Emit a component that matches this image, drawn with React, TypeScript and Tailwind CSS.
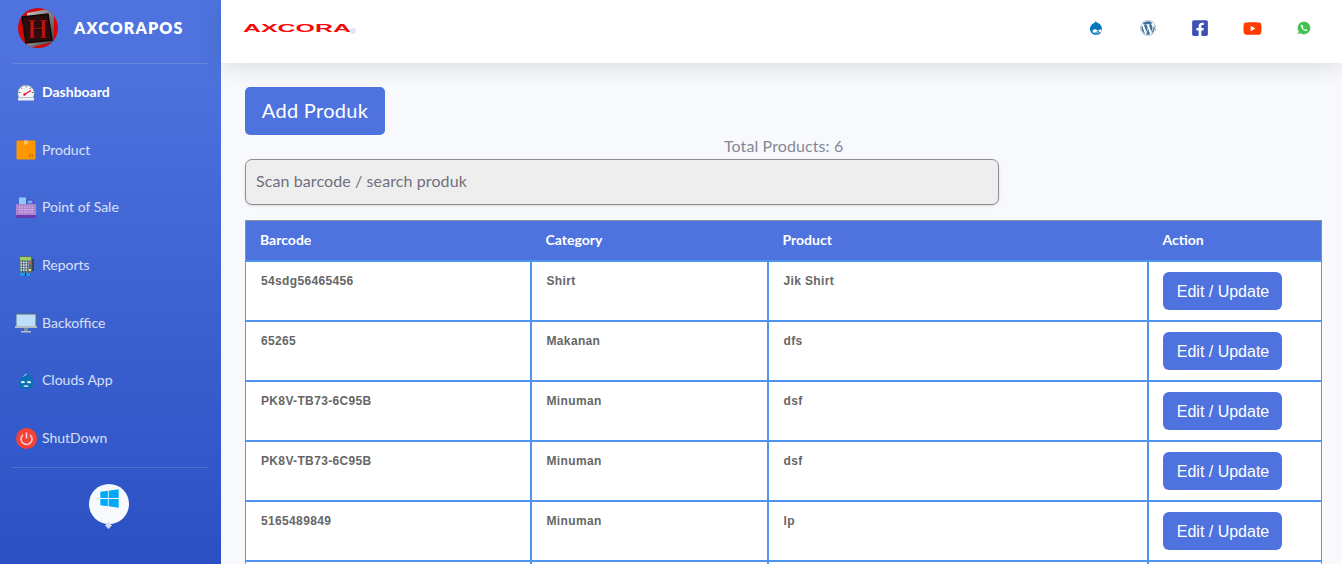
import { FaDrupal, FaWordpress, FaFacebookSquare, FaYoutube, FaWindows } from "react-icons/fa"

const nunito = { fontFamily: "Lato, 'Open Sans', sans-serif" }

function LogoIcon() {
  return (
    <svg width="40" height="40" viewBox="0 0 40 40">
      <defs>
        <clipPath id="logo-clip">
          <circle cx="20" cy="20" r="20" />
        </clipPath>
        <linearGradient id="logo-frame" x1="0" y1="0" x2="1" y2="1">
          <stop offset="0" stopColor="#c8c8c8" />
          <stop offset="1" stopColor="#3d3d3d" />
        </linearGradient>
      </defs>
      <g clipPath="url(#logo-clip)">
        <rect width="40" height="40" fill="#d00808" />
        <path d="M9 5L36 0V34L9 40z" fill="url(#logo-frame)" />
        <path d="M4 9L30 6L34 32L8 35z" fill="#2a0d0d" stroke="#120606" strokeWidth="1.500" />
        <text x="19.500" y="30" textAnchor="middle" fontFamily="'Liberation Serif', serif" fontWeight="700" fontSize="27" fill="#c01212" stroke="#0d0505" strokeWidth="0.600">H</text>
      </g>
    </svg>
  )
}

function GaugeIcon() {
  return (
    <svg width="18" height="17" viewBox="0 0 18 17">
      <path d="M1.800 13.500a8.300 8.300 0 1 1 14.400 0z" fill="#f5f5f5" stroke="#6b7280" strokeWidth="0.500" />
      <rect x="1" y="13.500" width="16" height="3" rx="0.500" fill="#eceff1" />
      <path d="M9 1.500v1.800M4 3.500l1.100 1.300M14 3.500l-1.100 1.300M1.500 8.500h1.800M14.700 8.500h1.800" stroke="#4b5563" strokeWidth="0.900" />
      <path d="M7.500 10.500L14 6.500" stroke="#e8123c" strokeWidth="1.400" />
      <circle cx="7.500" cy="10.500" r="1.200" fill="#e8123c" />
    </svg>
  )
}

function BoxIcon() {
  return (
    <svg width="20" height="20" viewBox="0 0 20 20">
      <rect x="0.500" y="0.500" width="19" height="19" rx="1" fill="#ff9800" />
      <rect x="8" y="0.500" width="3.500" height="4" fill="#ffc266" />
      <rect x="13" y="14" width="1.500" height="3" fill="#c77700" />
      <rect x="15.500" y="14" width="1.500" height="3" fill="#c77700" />
    </svg>
  )
}

function RegisterIcon() {
  return (
    <svg width="22" height="22" viewBox="0 0 22 22">
      <rect x="4" y="0.500" width="7" height="8" fill="#90caf9" />
      <rect x="12" y="3" width="6" height="4" rx="1" fill="#64b5f6" stroke="#5e35b1" strokeWidth="1" />
      <rect x="1" y="7" width="20" height="12" rx="1" fill="#b085d0" />
      <rect x="1" y="18" width="20" height="3" fill="#6a3bb0" />
      <path d="M4 10h14M4 12.500h14M4 15h14" stroke="#d9c2ea" strokeWidth="1.200" strokeDasharray="1.500 1" />
    </svg>
  )
}

function CalculatorIcon() {
  return (
    <svg width="18" height="22" viewBox="0 0 18 22">
      <rect x="2" y="1" width="13" height="17" rx="1" fill="#546e7a" />
      <rect x="15" y="4" width="2" height="12" fill="#37474f" />
      <rect x="3" y="2" width="11" height="3.500" fill="#9ccc65" />
      <path d="M3.500 7.500h8M3.500 10h8M3.500 12.500h8M3.500 15h8" stroke="#eceff1" strokeWidth="1.500" strokeDasharray="1.500 1" />
      <rect x="12" y="7" width="2" height="2" fill="#ef5350" />
      <rect x="12" y="14" width="2" height="2" fill="#fdd835" />
      <rect x="3" y="18" width="10" height="3" fill="#2196f3" />
      <rect x="8" y="18" width="1" height="3" fill="#111827" />
    </svg>
  )
}

function MonitorIcon() {
  return (
    <svg width="22" height="20" viewBox="0 0 22 20">
      <rect x="1" y="1" width="20" height="13" fill="#bbdefb" stroke="#546e7a" strokeWidth="1" />
      <rect x="0" y="13" width="22" height="2" fill="#b0bec5" />
      <rect x="9" y="15" width="4" height="3" fill="#78909c" />
      <rect x="6" y="18" width="10" height="1.500" fill="#b0bec5" />
    </svg>
  )
}

function DrupalSidebarIcon() {
  return (
    <svg width="16" height="17" viewBox="0 0 16 17">
      <path d="M9 0.500C9.500 3 15.500 5.500 15.500 11a7 6 0 0 1-15 0C0.500 6.500 7 4.500 9 0.500z" fill="#0a6eb4" />
      <path d="M8 1.500C7.300 3 5.500 4 4.200 5.200L8.800 2.500z" fill="#e6f0fa" />
      <path d="M2.500 10.500c1.500-1.800 3.200-1.800 4.700-0.300-1.300 1.200-3.300 1.600-4.700 0.300zM8.700 10.200c1.400-1.500 3.300-1.500 4.600 0.200-1.300 1.200-3.300 1.100-4.600-0.200z" fill="#f5f8fc" />
      <path d="M5 14c1.500-0.900 4.500-0.900 6 0-1.500 1.400-4.500 1.400-6 0z" fill="#dbe7f3" />
    </svg>
  )
}

function PowerIcon() {
  return (
    <svg width="21" height="21" viewBox="0 0 21 21">
      <circle cx="10.500" cy="10.500" r="10.500" fill="#f44336" />
      <path d="M7 6.800a5.500 5.500 0 1 0 7 0" fill="none" stroke="#ffcdd2" strokeWidth="1.600" />
      <path d="M10.500 4.500v6" stroke="#ffcdd2" strokeWidth="1.600" />
    </svg>
  )
}

function WhatsappIcon() {
  return (
    <svg width="16" height="16" viewBox="0 0 16 16">
      <path d="M8 0.500a7.500 7.500 0 0 0-6.400 11.400L0.500 15.500l3.700-1A7.500 7.500 0 1 0 8 0.500z" fill="#f4f4f4" />
      <path d="M8 1.800a6.200 6.200 0 0 0-5.200 9.600l-0.700 2.500 2.600-0.700A6.200 6.200 0 1 0 8 1.800z" fill="#40c351" />
      <path d="M5.800 4.600c-0.500 0.300-1 1-0.900 1.800 0.200 1.500 2.800 4.400 4.900 4.700 0.800 0.100 1.500-0.400 1.700-1.100l-1.700-1-0.800 0.700c-0.900-0.300-1.900-1.300-2.300-2.300l0.700-0.800z" fill="#fff" />
    </svg>
  )
}

const navItems = [
  { label: "Dashboard", icon: <GaugeIcon />, active: true },
  { label: "Product", icon: <BoxIcon /> },
  { label: "Point of Sale", icon: <RegisterIcon /> },
  { label: "Reports", icon: <CalculatorIcon /> },
  { label: "Backoffice", icon: <MonitorIcon /> },
  { label: "Clouds App", icon: <DrupalSidebarIcon /> },
  { label: "ShutDown", icon: <PowerIcon /> },
]

const products = [
  { barcode: "54sdg56465456", category: "Shirt", product: "Jik Shirt" },
  { barcode: "65265", category: "Makanan", product: "dfs" },
  { barcode: "PK8V-TB73-6C95B", category: "Minuman", product: "dsf" },
  { barcode: "PK8V-TB73-6C95B", category: "Minuman", product: "dsf" },
  { barcode: "5165489849", category: "Minuman", product: "lp" },
]

const socials = [
  <FaDrupal key="drupal" className="size-[16px] text-[#0678be]" />,
  <FaWordpress key="wp" className="size-[16px] text-[#3f729b]" />,
  <FaFacebookSquare key="fb" className="size-[18px] text-[#3f51b5]" />,
  <FaYoutube key="yt" className="size-[19px] text-[#ff3d00]" />,
  <WhatsappIcon key="wa" />,
]

function Sidebar() {
  return (
    <aside className="w-[221px] shrink-0 bg-linear-to-b from-[#4e73df] from-10% to-[#2a50c3] flex flex-col">
      <div className="h-[63px] flex items-center pl-[18px] pb-[8px]">
        <LogoIcon />
        <span className="ml-4 text-white text-[16px] font-extrabold tracking-[1.15px]">AXCORAPOS</span>
      </div>
      <div className="mx-[13px] h-px bg-white/15" />
      <nav className="flex flex-col">
        {navItems.map((item) => (
          <a key={item.label} href="#" className="h-[57.6px] flex items-center pl-[15px]">
            <span className="w-[22px] flex justify-center shrink-0">{item.icon}</span>
            <span className={item.active ? "ml-[5px] pb-[2px] text-[14px] font-bold text-white" : "ml-[5px] pb-[2px] text-[14px] text-white/80"}>
              {item.label}
            </span>
          </a>
        ))}
      </nav>
      <div className="mx-[13px] h-px bg-white/15" />
      <div className="flex justify-center mt-4 pr-[3px]">
        <div className="relative size-10 rounded-full bg-[#f8f9fc] flex justify-center pt-1">
          <FaWindows className="size-[21px] text-[#03a9f4]" />
          <span className="absolute left-[17px] bottom-[-4px] size-[5px] rotate-45 bg-[#d5dcf2]" />
        </div>
      </div>
    </aside>
  )
}

function Topbar() {
  return (
    <header className="h-[63px] shrink-0 bg-white shadow-[0_4px_20px_rgba(58,59,69,0.15)] flex items-center justify-between pl-[22px] pr-[12px] relative">
      <svg width="116" height="14" viewBox="0 0 116 14" className="-mt-[7px]">
        <text x="0" y="11" textLength="108" lengthAdjust="spacingAndGlyphs" fontFamily="'Liberation Sans', sans-serif" fontWeight="700" fontSize="11" fill="#f50a0a">AXCORA</text>
        <circle cx="110" cy="10" r="3" fill="#dbe6f8" />
      </svg>
      <div className="flex items-center -mt-[7px]">
        {socials.map((icon) => (
          <span key={icon.key} className="w-[52px] flex justify-center">{icon}</span>
        ))}
      </div>
    </header>
  )
}

function ProductTable() {
  return (
    <table className="mt-[15px] w-[1076px] table-fixed border-collapse" style={{ fontFamily: "'Liberation Sans', sans-serif" }}>
      <colgroup>
        <col className="w-[285px]" />
        <col className="w-[237px]" />
        <col className="w-[380px]" />
        <col className="w-[174px]" />
      </colgroup>
      <thead>
        <tr className="h-[40px] bg-[#4e73df] text-white text-left text-[14px] font-bold border border-[#8a8f9c]" style={nunito}>
          <th className="pl-[14px] pb-[2px] font-bold">Barcode</th>
          <th className="pl-[15px] pb-[2px] font-bold">Category</th>
          <th className="pl-[15px] pb-[2px] font-bold">Product</th>
          <th className="pl-[15px] pb-[2px] font-bold">Action</th>
        </tr>
      </thead>
      <tbody className="bg-white text-[12px] font-bold text-[#666] tracking-[0.35px]">
        {products.map((p, i) => (
          <tr key={i} className="h-[60px]">
            <td className="border-2 border-[#4f94ef] border-l-[#8a8f9c] border-l pl-[15px] pt-[10px] align-top">{p.barcode}</td>
            <td className="border-2 border-[#4f94ef] pl-[15px] pt-[10px] align-top">{p.category}</td>
            <td className="border-2 border-[#4f94ef] pl-[15px] pt-[10px] align-top">{p.product}</td>
            <td className="border-2 border-[#4f94ef] border-r-[#8a8f9c] border-r pl-[14px] align-middle">
              <button className="w-[119px] h-[38px] pt-[2px] pl-[2px] rounded-[6px] bg-[#4e73df] text-white text-[16px] font-normal tracking-normal">
                Edit / Update
              </button>
            </td>
          </tr>
        ))}
        {/* next row only just shows at the bottom of the window */}
        <tr className="h-[60px]">
          <td className="border-2 border-[#4f94ef] border-l-[#8a8f9c] border-l" />
          <td className="border-2 border-[#4f94ef]" />
          <td className="border-2 border-[#4f94ef]" />
          <td className="border-2 border-[#4f94ef] border-r-[#8a8f9c] border-r" />
        </tr>
      </tbody>
    </table>
  )
}

export default function App() {
  return (
    <div className="h-[564px] w-[1342px] overflow-hidden flex bg-[#f8f9fc]" style={nunito}>
      <Sidebar />
      <main className="flex-1 flex flex-col min-w-0">
        <Topbar />
        <div className="pt-[24px] pl-[24px]">
          <button className="w-[140px] h-[48px] pb-[2px] rounded-[5px] bg-[#4e73df] text-white text-[20px] tracking-[0.3px]">Add Produk</button>
          <p className="h-[24px] leading-[22px] pl-[479px] text-[16px] tracking-[0.1px] text-[#858796]">Total Products: 6</p>
          <div className="w-[754px] h-[46px] pb-[2px] rounded-[7px] border border-[#8f8f8f] bg-[#eeeeee] shadow-sm flex items-center pl-[10px] text-[16px] tracking-[0.1px] text-[#6e707e]">
            Scan barcode / search produk
          </div>
          <ProductTable />
        </div>
      </main>
    </div>
  )
}
